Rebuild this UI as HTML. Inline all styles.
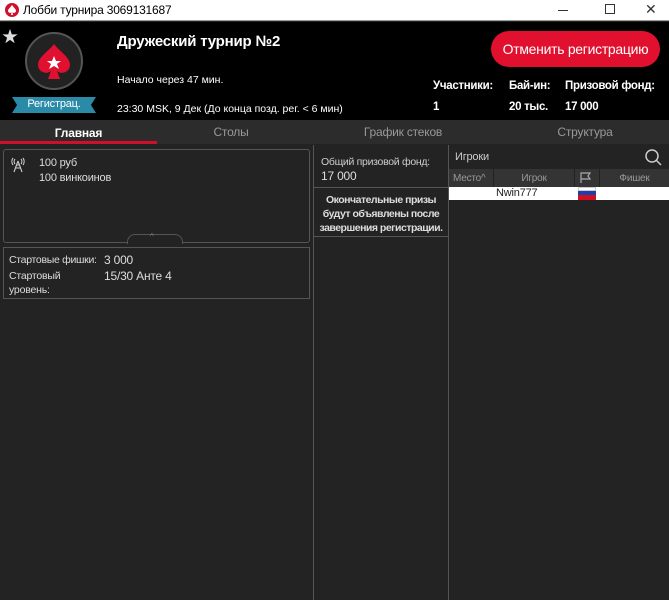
<!DOCTYPE html>
<html><head><meta charset="utf-8"><style>
*{margin:0;padding:0;box-sizing:border-box}
body{width:669px;height:600px;overflow:hidden;background:#232323;font-family:"Liberation Sans","Noto Sans CJK SC",sans-serif;position:relative;color:#ddd;letter-spacing:-0.2px}
.a{position:absolute}
.t{white-space:nowrap}
</style></head><body>
<div class="a" style="left:0;top:0;width:669px;height:21px;background:#fff;border-bottom:1px solid #999"></div>
<svg class="a" style="left:5px;top:3px" width="14" height="14" viewBox="0 0 14 14"><circle cx="7" cy="7" r="7" fill="#d0102a"/><path d="M7 2C5 5 3 6 3 8a2 2 0 0 0 3.5 1.2L6 12h2l-.5-2.8A2 2 0 0 0 11 8c0-2-2-3-4-6z" fill="#fff"/></svg>
<div class="a t" style="left:23px;top:3px;font-size:12px;color:#000;letter-spacing:-0.2px">Лобби турнира 3069131687</div>
<div class="a" style="left:558px;top:10px;width:10px;height:1px;background:#333"></div>
<div class="a" style="left:605px;top:4px;width:10px;height:10px;border:1px solid #333"></div>
<div class="a t" style="left:645px;top:1px;font-size:14px;color:#333">✕</div>

<div class="a" style="left:0;top:22px;width:669px;height:98px;background:#000"></div>
<div class="a t" style="left:2px;top:23px;font-size:16px;color:#ddd">★</div>
<div class="a" style="left:25px;top:32px;width:58px;height:58px;border-radius:50%;background:#222;border:2px solid #555"></div>
<svg class="a" style="left:36px;top:43px" width="36" height="38" viewBox="0 0 36 38"><path d="M18 1C12 9 2 14 2 22a8 8 0 0 0 13 6l-3 8h12l-3-8a8 8 0 0 0 13-6C34 14 24 9 18 1z" fill="#e01030"/><path d="M18 13l2 5h5l-4 3 2 5-5-3-5 3 2-5-4-3h5z" fill="#fff"/></svg>
<div class="a" style="left:12px;top:97px;width:84px;height:16px;background:#2a8aa8;clip-path:polygon(0 0,100% 0,94% 50%,100% 100%,0 100%,6% 50%)"></div>
<div class="a t" style="left:12px;top:98px;width:84px;text-align:center;font-size:11px;color:#fff">Регистрац.</div>
<div class="a t" style="left:117px;top:33px;font-size:15px;font-weight:bold;color:#fff">Дружеский турнир №2</div>
<div class="a t" style="left:117px;top:74px;font-size:10.5px;color:#fff;letter-spacing:0">Начало через 47 мин.</div>
<div class="a t" style="left:117px;top:103px;font-size:10.5px;color:#fff;letter-spacing:0">23:30 MSK, 9 Дек (До конца позд. рег. &lt; 6 мин)</div>
<div class="a t" style="left:491px;top:31px;width:169px;height:36px;border-radius:18px;background:#e0102e;color:#fff;font-size:14px;text-align:center;line-height:36px;letter-spacing:-0.3px">Отменить регистрацию</div>
<div class="a t" style="left:433px;top:80px;font-size:11.5px;font-weight:bold;color:#fff;letter-spacing:-0.3px">Участники:</div>
<div class="a t" style="left:509px;top:80px;font-size:11.5px;font-weight:bold;color:#fff;letter-spacing:-0.3px">Бай-ин:</div>
<div class="a t" style="left:565px;top:80px;font-size:11.5px;font-weight:bold;color:#fff;letter-spacing:-0.3px">Призовой фонд:</div>
<div class="a t" style="left:433px;top:101px;font-size:11.5px;font-weight:bold;color:#fff">1</div>
<div class="a t" style="left:509px;top:101px;font-size:11.5px;font-weight:bold;color:#fff;letter-spacing:-0.3px">20 тыс.</div>
<div class="a t" style="left:565px;top:101px;font-size:11.5px;font-weight:bold;color:#fff;letter-spacing:-0.3px">17 000</div>

<div class="a" style="left:0;top:120px;width:669px;height:24px;background:#2c2c2c"></div>
<div class="a" style="left:0;top:141px;width:157px;height:3px;background:#d0102a"></div>
<div class="a t" style="left:0;top:126px;width:157px;text-align:center;font-size:12px;font-weight:bold;color:#fff">Главная</div>
<div class="a t" style="left:157px;top:125px;width:148px;text-align:center;font-size:12px;color:#999">Столы</div>
<div class="a t" style="left:330px;top:125px;width:146px;text-align:center;font-size:12px;color:#999">График стеков</div>
<div class="a t" style="left:500px;top:125px;width:170px;text-align:center;font-size:12px;color:#999">Структура</div>

<div class="a" style="left:3px;top:149px;width:307px;height:94px;border:1px solid #555;border-radius:3px"></div>
<div class="a" style="left:127px;top:234px;width:56px;height:10px;background:#232323;border:1px solid #555;border-bottom:none;border-radius:8px 8px 0 0"></div>
<div class="a t" style="left:150px;top:232px;font-size:8px;color:#777">^</div>
<svg class="a" style="left:10px;top:157px" width="16" height="16" viewBox="0 0 16 16" fill="none" stroke="#ccc" stroke-width="1.1"><path d="M5 2a4 4 0 0 0 0 5M11 2a4 4 0 0 1 0 5M3 1a6 6 0 0 0 0 7M13 1a6 6 0 0 1 0 7"/><path d="M8 4L4 15M8 4l4 11M5.5 11h5M6.5 8h3"/></svg>
<div class="a t" style="left:39px;top:157px;font-size:11px;color:#ddd">100 руб</div>
<div class="a t" style="left:39px;top:172px;font-size:11px;color:#ddd">100 винкоинов</div>
<div class="a" style="left:3px;top:247px;width:307px;height:52px;border:1px solid #555"></div>
<div class="a t" style="left:9px;top:254px;font-size:10.5px;color:#ddd;letter-spacing:-0.3px">Стартовые фишки:</div>
<div class="a t" style="left:104px;top:253px;font-size:12px;color:#ddd">3 000</div>
<div class="a t" style="left:9px;top:270px;font-size:10.5px;color:#ddd">Стартовый</div>
<div class="a t" style="left:104px;top:269px;font-size:12px;color:#ddd">15/30 Анте 4</div>
<div class="a t" style="left:9px;top:284px;font-size:10.5px;color:#ddd">уровень:</div>

<div class="a" style="left:313px;top:145px;width:1px;height:455px;background:#555"></div>
<div class="a" style="left:448px;top:145px;width:1px;height:455px;background:#555"></div>
<div class="a" style="left:314px;top:187px;width:134px;height:1px;background:#555"></div>
<div class="a" style="left:314px;top:236px;width:134px;height:1px;background:#555"></div>
<div class="a t" style="left:321px;top:156px;font-size:10.5px;color:#ccc;letter-spacing:-0.3px">Общий призовой фонд:</div>
<div class="a t" style="left:321px;top:169px;font-size:12px;color:#ddd">17 000</div>
<div class="a t" style="left:314px;top:193px;width:134px;text-align:center;font-size:10.5px;font-weight:bold;color:#ddd;line-height:14px;letter-spacing:-0.5px">Окончательные призы<br>будут объявлены после<br>завершения регистрации.</div>

<div class="a t" style="left:455px;top:151px;font-size:11px;color:#ccc">Игроки</div>
<svg class="a" style="left:644px;top:148px" width="18" height="18" viewBox="0 0 18 18"><circle cx="8" cy="8" r="6" fill="none" stroke="#ccc" stroke-width="1.5"/><path d="M12.5 12.5L17 17" stroke="#ccc" stroke-width="1.5"/></svg>
<div class="a" style="left:449px;top:169px;width:220px;height:18px;background:#343434"></div>
<div class="a" style="left:493px;top:169px;width:1px;height:18px;background:#222"></div>
<div class="a" style="left:574px;top:169px;width:1px;height:18px;background:#222"></div>
<div class="a" style="left:599px;top:169px;width:1px;height:18px;background:#222"></div>
<div class="a t" style="left:453px;top:173px;font-size:10px;color:#999">Место^</div>
<div class="a t" style="left:494px;top:173px;width:80px;text-align:center;font-size:10px;color:#999">Игрок</div>
<svg class="a" style="left:580px;top:172px" width="12" height="12" viewBox="0 0 12 12"><path d="M1 11V1h9l-2 3 2 3H1" fill="none" stroke="#aaa" stroke-width="1.2"/></svg>
<div class="a t" style="left:600px;top:173px;width:69px;text-align:center;font-size:10px;color:#999">Фишек</div>
<div class="a" style="left:449px;top:187px;width:220px;height:13px;background:#fff"></div>
<div class="a t" style="left:496px;top:187px;font-size:11px;color:#222">Nwin777</div>
<div class="a" style="left:578px;top:187px;width:18px;height:4px;background:#fff;border:1px solid #ccc"></div>
<div class="a" style="left:578px;top:191px;width:18px;height:4px;background:#1c3fb0"></div>
<div class="a" style="left:578px;top:195px;width:18px;height:5px;background:#d01020"></div>
</body></html>
